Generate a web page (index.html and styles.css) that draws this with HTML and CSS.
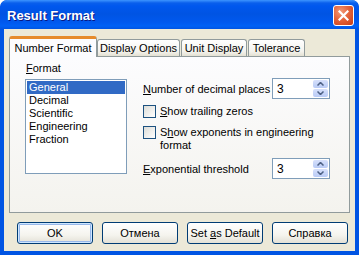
FILE: index.html
```html
<!DOCTYPE html>
<html lang="en">
<head>
<meta charset="UTF-8">
<title>Result Format</title>
<link rel="stylesheet" href="styles.css">
</head>
<body>

<div class="window">
    <div class="titlebar">
        <span class="title">Result Format</span>
        <span class="close">
            <svg width="11" height="11" viewBox="0 0 11 11"><path d="M1.5 1.5 L9.5 9.5 M9.5 1.5 L1.5 9.5" stroke="#fff" stroke-width="2.2" stroke-linecap="square"/></svg>
        </span>
    </div>

    <div class="client">
        <div class="tabs">
            <div class="tab active">Number Format</div>
            <div class="tab display">Display Options</div>
            <div class="tab unit">Unit Display</div>
            <div class="tab tolerance">Tolerance</div>
        </div>

        <div class="panel">
            <div class="format-col">
                <div class="caption"><u>F</u>ormat</div>
                <ul class="listbox">
                    <li class="selected">General</li>
                    <li>Decimal</li>
                    <li>Scientific</li>
                    <li>Engineering</li>
                    <li>Fraction</li>
                </ul>
            </div>

            <div class="options">
                <div class="field">
                    <label><u>N</u>umber of decimal places</label>
                    <div class="spin">
                        <span class="value">3</span>
                        <span class="arrows">
                            <span class="arrow"><svg width="7" height="4" viewBox="0 0 7 4"><path d="M0.5 3.5 L3.5 0.5 L6.5 3.5" fill="none" stroke="#4d6185" stroke-width="1.5"/></svg></span>
                            <span class="arrow"><svg width="7" height="4" viewBox="0 0 7 4"><path d="M0.5 0.5 L3.5 3.5 L6.5 0.5" fill="none" stroke="#4d6185" stroke-width="1.5"/></svg></span>
                        </span>
                    </div>
                </div>

                <label class="check first"><span class="box"></span><span class="text"><u>S</u>how trailing zeros</span></label>
                <label class="check"><span class="box"></span><span class="text">S<u>h</u>ow exponents in engineering format</span></label>

                <div class="field last">
                    <label><u>E</u>xponential threshold</label>
                    <div class="spin">
                        <span class="value">3</span>
                        <span class="arrows">
                            <span class="arrow"><svg width="7" height="4" viewBox="0 0 7 4"><path d="M0.5 3.5 L3.5 0.5 L6.5 3.5" fill="none" stroke="#4d6185" stroke-width="1.5"/></svg></span>
                            <span class="arrow"><svg width="7" height="4" viewBox="0 0 7 4"><path d="M0.5 0.5 L3.5 3.5 L6.5 0.5" fill="none" stroke="#4d6185" stroke-width="1.5"/></svg></span>
                        </span>
                    </div>
                </div>
            </div>
        </div>

        <div class="buttons">
            <button class="default">OK</button>
            <button>Отмена</button>
            <button>Set <u>a</u>s Default</button>
            <button>Справка</button>
        </div>
    </div>
</div>

</body>
</html>
```

FILE: styles.css
```css
body {
    margin: 0;
    background: #fff;
    font-family: "Liberation Sans", Arial, sans-serif;
    font-size: 11px;
    color: #000;
}
u {
    text-decoration: underline;
    text-underline-offset: 1px;
}
.window {
    width: 359px;
    height: 255px;
    display: flex;
    flex-direction: column;
    background: #0054e3;
    border-radius: 7px 7px 0 0;
    box-sizing: border-box;
    overflow: hidden;
}
.titlebar {
    height: 29px;
    flex: none;
    display: flex;
    align-items: center;
    justify-content: space-between;
    padding: 0 5px 0 7px;
    background: linear-gradient(#3d95ff 0, #0a5fec 3px, #0058ee 6px, #0054e3 14px, #0058ee 22px, #0061f5 26px, #0054e3 29px);
    border-radius: 7px 7px 0 0;
    box-sizing: border-box;
}
.title {
    color: #fff;
    font-weight: bold;
    font-size: 13px;
    text-shadow: 1px 1px #0a1883;
    margin-top: 1px;
}
.close {
    width: 21px;
    height: 21px;
    box-sizing: border-box;
    border: 1px solid #fff;
    border-radius: 3px;
    background: radial-gradient(circle at 35% 30%, #f29a78 0, #e4643c 45%, #c73c14 100%);
    display: flex;
    align-items: center;
    justify-content: center;
    margin-top: 1px;
}
.client {
    flex: 1;
    margin: 0 4px 4px 4px;
    background: #ece9d8;
    padding: 7px 5px 0 5px;
    display: flex;
    flex-direction: column;
}
.tabs {
    display: flex;
    align-items: flex-end;
    height: 20px;
}
.tab {
    height: 17px;
    line-height: 16px;
    padding: 0;
    text-align: center;
    border: 1px solid #919b9c;
    border-bottom: none;
    border-radius: 3px 3px 0 0;
    background: linear-gradient(#fff, #f4f3ee 70%, #e3e0d2);
    box-sizing: border-box;
    margin-left: 1px;
    white-space: nowrap;
}
.tab.display {
    width: 83px;
    margin-left: 0;
}
.tab.unit {
    width: 66px;
}
.tab.tolerance {
    width: 57px;
}
.tab.active {
    height: 21px;
    line-height: 19px;
    margin-left: 0;
    margin-bottom: -1px;
    position: relative;
    z-index: 1;
    background: #fcfcfe;
    border-top: 3px solid #ffc83c;
    border-color: #e68b2c #919b9c #919b9c #919b9c;
    width: 88px;
}
.panel {
    height: 157px;
    box-sizing: border-box;
    border: 1px solid #919b9c;
    background: linear-gradient(#fcfcfe, #f4f3ee);
    display: flex;
    padding: 5px 0 0 15px;
}
.format-col {
    width: 102px;
}
.caption {
    line-height: 13px;
    height: 13px;
    padding-left: 1px;
}
.listbox {
    list-style: none;
    margin: 4px 0 0 0;
    padding: 1px;
    height: 95px;
    box-sizing: border-box;
    border: 1px solid #7f9db9;
    background: #fff;
}
.listbox li {
    height: 13px;
    line-height: 13px;
    padding-left: 2px;
}
.listbox li.selected {
    background: #316ac5;
    color: #fff;
}
.options {
    width: 187px;
    margin-left: 16px;
    padding-top: 16px;
    display: flex;
    flex-direction: column;
}
.field {
    display: flex;
    align-items: center;
    justify-content: space-between;
}
.field.last {
    margin-top: 6px;
}
.spin {
    width: 58px;
    height: 21px;
    box-sizing: border-box;
    border: 1px solid #7f9db9;
    background: #fff;
    display: flex;
    justify-content: space-between;
    padding: 1px;
}
.spin .value {
    padding: 2px 0 0 3px;
    font-size: 12px;
}
.arrows {
    width: 15px;
    display: flex;
    flex-direction: column;
    gap: 1px;
}
.arrow {
    flex: 1;
    display: flex;
    align-items: center;
    justify-content: center;
    background: linear-gradient(#d6e0fb, #b9cbf6);
    border-radius: 2px;
}
.check {
    display: flex;
    align-items: flex-start;
    gap: 4px;
    line-height: 13px;
    margin-top: 8px;
}
.check.first {
    margin-top: 6px;
}
.check .box {
    flex: none;
    width: 13px;
    height: 13px;
    box-sizing: border-box;
    border: 1px solid #1c5180;
    background: linear-gradient(135deg, #dcdcd7, #fff);
}
.buttons {
    display: flex;
    gap: 9px;
    padding-left: 8px;
    margin-top: 9px;
}
.buttons button {
    width: 76px;
    height: 22px;
    font-family: "Liberation Sans", Arial, sans-serif;
    font-size: 11px;
    color: #000;
    border: 1px solid #003c74;
    border-radius: 3px;
    background: linear-gradient(#fff, #f5f4ee 60%, #e3e1d6);
    padding: 0;
}
.buttons button.default {
    box-shadow: inset 0 0 0 1px #cee7ff, inset 0 0 0 2px #98b8ea;
}
```
